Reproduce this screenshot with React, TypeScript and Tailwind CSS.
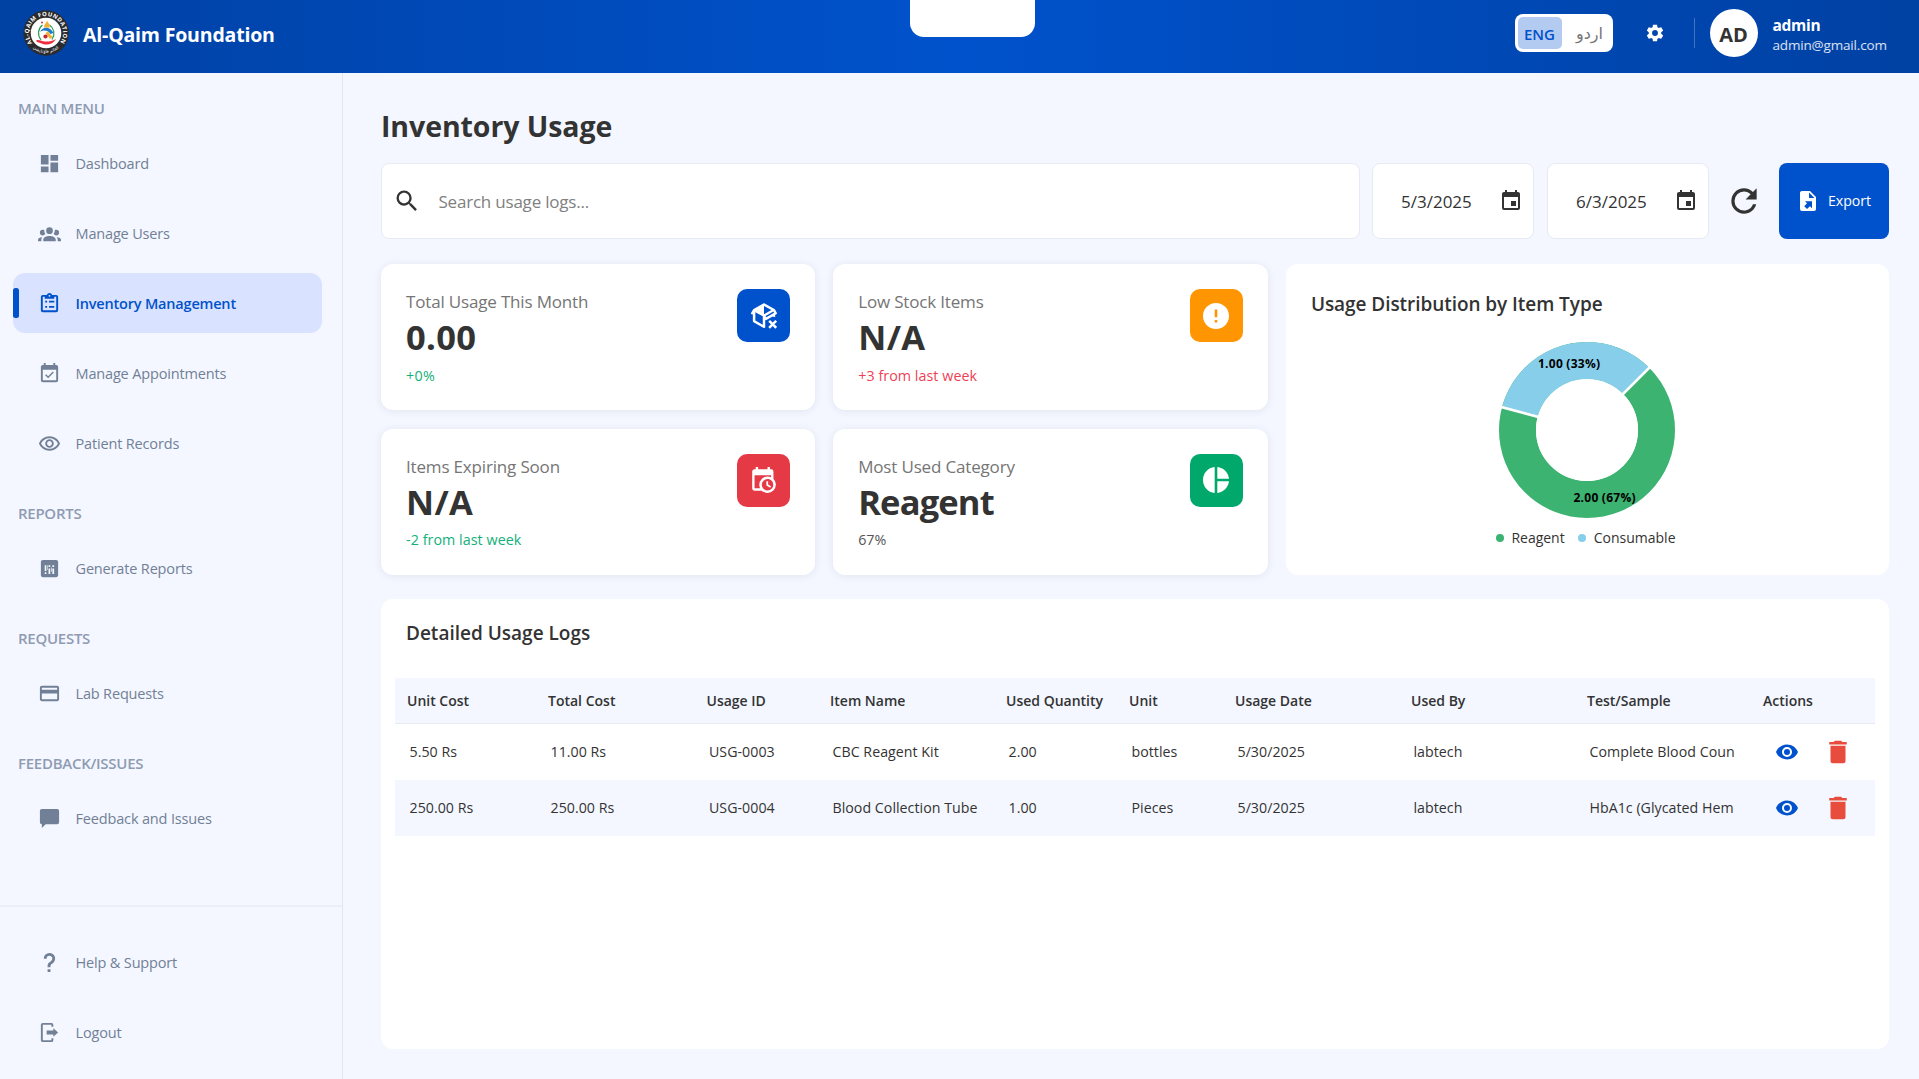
import type { ReactNode } from "react";

const paths = {
  dashboard: "M13,3V9H21V3M13,21H21V11H13M3,21H11V15H3M3,13H11V3H3V13Z",
  group:
    "M12,5.5A3.5,3.5 0 0,1 15.5,9A3.5,3.5 0 0,1 12,12.5A3.5,3.5 0 0,1 8.5,9A3.5,3.5 0 0,1 12,5.5M5,8C5.56,8 6.08,8.15 6.53,8.42C6.38,9.85 6.8,11.27 7.66,12.38C7.16,13.34 6.16,14 5,14A3,3 0 0,1 2,11A3,3 0 0,1 5,8M19,8A3,3 0 0,1 22,11A3,3 0 0,1 19,14C17.84,14 16.84,13.34 16.34,12.38C17.2,11.27 17.62,9.85 17.47,8.42C17.92,8.15 18.44,8 19,8M5.5,18.25C5.5,16.18 8.41,14.5 12,14.5C15.59,14.5 18.5,16.18 18.5,18.25V20H5.5V18.25M0,20V18.5C0,17.11 1.89,15.94 4.45,15.6C3.86,16.28 3.5,17.22 3.5,18.25V20H0M24,20H20.5V18.25C20.5,17.22 20.14,16.28 19.55,15.6C22.11,15.94 24,17.11 24,18.5V20Z",
  clipboard:
    "M19,3H14.82C14.4,1.84 13.3,1 12,1C10.7,1 9.6,1.84 9.18,3H5A2,2 0 0,0 3,5V19A2,2 0 0,0 5,21H19A2,2 0 0,0 21,19V5A2,2 0 0,0 19,3M12,3A1,1 0 0,1 13,4A1,1 0 0,1 12,5A1,1 0 0,1 11,4A1,1 0 0,1 12,3M7,7H17V5H19V19H5V5H7V7M7.5,9H9.5V11H7.5V9M11.5,9H17V11H11.5V9M7.5,14.5H9.5V16.5H7.5V14.5M11.5,14.5H17V16.5H11.5V14.5Z",
  calendarCheck:
    "M19,19H5V8H19M19,3H18V1H16V3H8V1H6V3H5C3.89,3 3,3.9 3,5V19A2,2 0 0,0 5,21H19A2,2 0 0,0 21,19V5A2,2 0 0,0 19,3M16.53,11.06L15.47,10L10.59,14.88L8.47,12.76L7.41,13.82L10.59,17L16.53,11.06Z",
  eyeOutline:
    "M12 6.5c3.79 0 7.17 2.13 8.82 5.5-1.65 3.37-5.02 5.5-8.82 5.5s-7.17-2.13-8.82-5.5C4.83 8.63 8.21 6.5 12 6.5m0-2C7 4.5 2.73 7.61 1 12c1.73 4.39 6 7.5 11 7.5s9.27-3.11 11-7.5c-1.73-4.39-6-7.5-11-7.5zm0 5c1.38 0 2.5 1.12 2.5 2.5s-1.12 2.5-2.5 2.5-2.5-1.12-2.5-2.5 1.12-2.5 2.5-2.5m0-2c-2.48 0-4.5 2.02-4.5 4.5s2.02 4.5 4.5 4.5 4.5-2.02 4.5-4.5-2.02-4.5-4.5-4.5z",
  report:
    "M19,3H5C3.9,3 3,3.9 3,5V19C3,20.1 3.9,21 5,21H19C20.1,21 21,20.1 21,19V5C21,3.9 20.1,3 19,3M7,8.5H8.7V14.5H7V8.5M7,16H8.7V17.8H7V16M11,8.5H12.8V10.5H11V8.5M11,12H12.8V17.8H11V12M15,8.5H16.8V10.5H15V8.5M15,12H16.8V17.8H15V12M9.6,8.5H10.2V13.5H9.6V8.5M13.6,11H14.3V15.5H13.6V11Z",
  card: "M20,8H4V6H20M20,18H4V12H20M20,4H4C2.89,4 2,4.89 2,6V18C2,19.1 2.9,20 4,20H20C21.1,20 22,19.1 22,18V6C22,4.89 21.1,4 20,4Z",
  message: "M20,2H4A2,2 0 0,0 2,4V16A2,2 0 0,0 4,18V22L8,18H20A2,2 0 0,0 22,16V4A2,2 0 0,0 20,2Z",
  help: "M10,19H13V22H10V19M12,2C17.35,2.22 19.68,7.62 16.5,11.67C15.67,12.67 14.33,13.33 13.67,14.17C13,15 13,16 13,17H10C10,15.33 10,13.92 10.67,12.92C11.33,11.92 12.67,11.33 13.5,10.67C15.92,8.43 15.32,5.26 12,5A3,3 0 0,0 9,8H6A6,6 0 0,1 12,2Z",
  logout:
    "M16,16.5V14H9V10H16V7.5L21,12L16,16.5M14,2A2,2 0 0,1 16,4V6H14V4H5V20H14V18H16V20A2,2 0 0,1 14,22H5A2,2 0 0,1 3,20V4A2,2 0 0,1 5,2H14Z",
  cog: "M12,15.5A3.5,3.5 0 0,1 8.5,12A3.5,3.5 0 0,1 12,8.5A3.5,3.5 0 0,1 15.5,12A3.5,3.5 0 0,1 12,15.5M19.43,12.97C19.47,12.65 19.5,12.33 19.5,12C19.5,11.67 19.47,11.34 19.43,11L21.54,9.37C21.73,9.22 21.78,8.95 21.66,8.73L19.66,5.27C19.54,5.05 19.27,4.96 19.05,5.05L16.56,6.05C16.04,5.66 15.5,5.32 14.87,5.07L14.5,2.42C14.46,2.18 14.25,2 14,2H10C9.75,2 9.54,2.18 9.5,2.42L9.13,5.07C8.5,5.32 7.96,5.66 7.44,6.05L4.95,5.05C4.73,4.96 4.46,5.05 4.34,5.27L2.34,8.73C2.21,8.95 2.27,9.22 2.46,9.37L4.57,11C4.53,11.34 4.5,11.67 4.5,12C4.5,12.33 4.53,12.65 4.57,12.97L2.46,14.63C2.27,14.78 2.21,15.05 2.34,15.27L4.34,18.73C4.46,18.95 4.73,19.03 4.95,18.95L7.44,17.94C7.96,18.34 8.5,18.68 9.13,18.93L9.5,21.58C9.54,21.82 9.75,22 10,22H14C14.25,22 14.46,21.82 14.5,21.58L14.87,18.93C15.5,18.67 16.04,18.34 16.56,17.94L19.05,18.95C19.27,19.03 19.54,18.95 19.66,18.73L21.66,15.27C21.78,15.05 21.73,14.78 21.54,14.63L19.43,12.97Z",
  magnify:
    "M9.5,3A6.5,6.5 0 0,1 16,9.5C16,11.11 15.41,12.59 14.44,13.73L14.71,14H15.5L20.5,19L19,20.5L14,15.5V14.71L13.73,14.44C12.59,15.41 11.11,16 9.5,16A6.5,6.5 0 0,1 3,9.5A6.5,6.5 0 0,1 9.5,3M9.5,5C7,5 5,7 5,9.5C5,12 7,14 9.5,14C12,14 14,12 14,9.5C14,7 12,5 9.5,5Z",
  calendar:
    "M19,19H5V8H19M16,1V3H8V1H6V3H5C3.89,3 3,3.89 3,5V19A2,2 0 0,0 5,21H19A2,2 0 0,0 21,19V5C21,3.89 20.1,3 19,3H18V1M17,12H12V17H17V12Z",
  refresh:
    "M17.65,6.35C16.2,4.9 14.21,4 12,4A8,8 0 0,0 4,12A8,8 0 0,0 12,20C15.73,20 18.84,17.45 19.73,14H17.65C16.83,16.33 14.61,18 12,18A6,6 0 0,1 6,12A6,6 0 0,1 12,6C13.66,6 15.14,6.69 16.22,7.78L13,11H20V4L17.65,6.35Z",
  fileExport:
    "M6,2C4.89,2 4,2.9 4,4V20A2,2 0 0,0 6,22H18A2,2 0 0,0 20,20V8L14,2M13,3.5L18.5,9H13M8.93,12.22H16V19.29L13.88,17.17L11.05,20L8.22,17.17L11.05,14.35",
  packageRemove:
    "M2,10.96C1.5,10.68 1.35,10.07 1.63,9.59L3.13,7C3.24,6.8 3.41,6.66 3.6,6.58L11.43,2.18C11.59,2.06 11.79,2 12,2C12.21,2 12.41,2.06 12.57,2.18L20.47,6.62C20.66,6.72 20.82,6.88 20.91,7.08L22.36,9.6C22.64,10.08 22.47,10.69 22,10.96L21,11.54V13.35C20.37,13.13 19.7,13 19,13V12.69L14,15.59C13.67,15.77 13.3,15.76 13,15.6V21.6L12.57,21.82C12.41,21.94 12.21,22 12,22C11.79,22 11.59,21.94 11.43,21.82L3.53,17.38C3.21,17.21 3,16.88 3,16.5V10.96C2.7,11.13 2.32,11.14 2,10.96M12,4.15L12,10.85L17.96,7.5L12,4.15M5,15.91L11,19.29V12.58L5,9.21V15.91M13.85,13.36L20.13,9.73L19.55,8.72L13.27,12.35L13.85,13.36M22.54,16.88L21.12,15.46L19,17.59L16.88,15.46L15.46,16.88L17.59,19L15.46,21.12L16.88,22.54L19,20.41L21.12,22.54L22.54,21.12L20.41,19L22.54,16.88Z",
  alert: "M13,13H11V7H13M13,17H11V15H13M12,2A10,10 0 0,0 2,12A10,10 0 0,0 12,22A10,10 0 0,0 22,12A10,10 0 0,0 12,2Z",
  calendarClock:
    "M15,13H16.5V15.82L18.94,17.23L18.19,18.53L15,16.69V13M19,8H5V19H9.67C9.24,18.09 9,17.07 9,16A7,7 0 0,1 16,9C17.07,9 18.09,9.24 19,9.67V8M5,21C3.89,21 3,20.1 3,19V5C3,3.89 3.89,3 5,3H6V1H8V3H16V1H18V3H19A2,2 0 0,1 21,5V11.1C22.24,12.36 23,14.09 23,16A7,7 0 0,1 16,23C14.09,23 12.36,22.24 11.1,21H5M16,11.15A4.85,4.85 0 0,0 11.15,16C11.15,18.68 13.32,20.85 16,20.85A4.85,4.85 0 0,0 20.85,16C20.85,13.32 18.68,11.15 16,11.15Z",
  pie: "M11,2V22C5.9,21.5 2,17.2 2,12C2,6.8 5.9,2.5 11,2M13,2V11H22C21.5,6.2 17.8,2.5 13,2M13,13V22C17.7,21.5 21.5,17.8 22,13H13Z",
  eye: "M12,9A3,3 0 0,0 9,12A3,3 0 0,0 12,15A3,3 0 0,0 15,12A3,3 0 0,0 12,9M12,17A5,5 0 0,1 7,12A5,5 0 0,1 12,7A5,5 0 0,1 17,12A5,5 0 0,1 12,17M12,4.5C7,4.5 2.73,7.61 1,12C2.73,16.39 7,19.5 12,19.5C17,19.5 21.27,16.39 23,12C21.27,7.61 17,4.5 12,4.5Z",
  trash: "M19,4H15.5L14.5,3H9.5L8.5,4H5V6H19M6,19A2,2 0 0,0 8,21H16A2,2 0 0,0 18,19V7H6V19Z",
};
type IconName = keyof typeof paths;

function Icon({ name, className, viewBox = "0 0 24 24" }: { name: IconName; className: string; viewBox?: string }) {
  return (
    <svg viewBox={viewBox} className={`block shrink-0 fill-current ${className}`}>
      <path fillRule="evenodd" d={paths[name]} />
    </svg>
  );
}

function Logo() {
  return (
    <svg viewBox="0 0 46 46" className="size-[46px] shrink-0">
      <defs>
        <path id="ring-top" d="M 10 34 A 17.03 17.03 0 1 1 36 34" />
        <path id="ring-bottom" d="M 8.500 36.500 A 19.8 19.8 0 0 0 37.500 36.500" />
      </defs>
      <circle cx="23" cy="23" r="22.700" fill="#2b2b2e" />
      <circle cx="23" cy="23" r="15.300" fill="#fff" />
      <text fontFamily="Open Sans, sans-serif" fontWeight="700" fontSize="5.800" fill="#fff">
        <textPath href="#ring-top" textLength="74" startOffset="1">
          AL-QAIM FOUNDATION
        </textPath>
      </text>
      <text fontFamily="DejaVu Sans, sans-serif" fontSize="4.200" fill="#fff">
        <textPath href="#ring-bottom" startOffset="50%" textAnchor="middle">
          القائم فاؤنڈیشن
        </textPath>
      </text>
      <path d="M19.500 15C15 18.500 14 25 18 30" fill="none" stroke="#2f9e5b" strokeWidth="1.200" />
      <path d="M26.500 15C31 18 32.500 24 29 29.500" fill="none" stroke="#2f9e5b" strokeWidth="1.200" />
      <path d="M24 10.500C25 13 28 15 26.500 17.500H21C21 14 23.500 13 24 10.500Z" fill="#f2b134" />
      <circle cx="19" cy="12.500" r="1" fill="#d9363e" />
      <path d="M17 22C19 16.500 27 15.500 30.500 23L27.500 24C25 20 20 19.500 17 22Z" fill="#2379c9" />
      <path d="M25 21.500L29.500 27L27 29L22.500 23Z" fill="#f2b134" />
      <circle cx="22.500" cy="26.500" r="2.100" fill="#c8262e" />
      <path d="M13.500 30C17 29.500 19 31 22 31.500C26 31.800 29 31 33 29C30 34 25 35.500 20 34L13.500 31.800Z" fill="#ee2b3c" />
    </svg>
  );
}

function NavItem({ icon, label, active = false }: { icon: IconName; label: string; active?: boolean }) {
  return (
    <div
      className={`relative mb-2.5 ml-[13px] flex h-[60px] w-[309px] items-center rounded-xl pl-[25px] ${
        active ? "bg-[#d9e2ff] text-[#0052cc]" : "text-[#718096]"
      }`}
    >
      {active && <span className="absolute top-[15px] left-0 h-[30px] w-[5.5px] rounded-[2.500px] bg-[#0052cc]" />}
      <Icon name={icon} className="size-[23px]" />
      <span
        className={`ml-[14.500px] pt-px text-[14.500px] ${active ? "font-semibold tracking-[-0.19px]" : "tracking-[-0.16px]"}`}
      >
        {label}
      </span>
    </div>
  );
}

function SectionLabel({ children }: { children: ReactNode }) {
  return (
    <div className="flex h-[55px] items-start pt-[18.500px] pl-[18px] text-[15px] leading-[22px] font-semibold tracking-[-0.27px] text-[#8f9bb3]">
      {children}
    </div>
  );
}

function StatCard(p: { title: string; value: string; note: string; noteClass: string; valueClass: string; children: ReactNode; tile: string }) {
  return (
    <div className="flex h-[146px] justify-between rounded-xl bg-white pt-[25px] pr-[25px] pl-[25px] shadow-[0_1px_9px_rgba(30,41,80,0.09)]">
      <div className="pt-px">
        <div className="text-[17px] leading-6 tracking-[-0.17px] text-[#757575]">{p.title}</div>
        <div className={`leading-[45px] font-bold text-[#333] ${p.valueClass}`}>{p.value}</div>
        <div className={`mt-[6.500px] text-[14.300px] leading-5 ${p.noteClass}`}>{p.note}</div>
      </div>
      <div className={`flex size-[53px] items-center justify-center rounded-[10px] text-white ${p.tile}`}>{p.children}</div>
    </div>
  );
}

function DateField({ value }: { value: string }) {
  return (
    <div className="flex h-[76px] w-[162px] items-center justify-between rounded-lg border border-[#e6eaf2] bg-white pr-[10px] pl-[28px]">
      <span className="pt-px text-[17px] text-[#333]">{value}</span>
      <Icon name="calendar" className="size-6 text-[#333]" />
    </div>
  );
}

const columns = ["Unit Cost", "Total Cost", "Usage ID", "Item Name", "Used Quantity", "Unit", "Usage Date", "Used By", "Test/Sample", "Actions"];
const rows = [
  ["5.50 Rs", "11.00 Rs", "USG-0003", "CBC Reagent Kit", "2.00", "bottles", "5/30/2025", "labtech", "Complete Blood Coun"],
  ["250.00 Rs", "250.00 Rs", "USG-0004", "Blood Collection Tube", "1.00", "Pieces", "5/30/2025", "labtech", "HbA1c (Glycated Hem"],
];
const gridCols = "grid grid-cols-[141px_158.500px_123.500px_176px_123px_106px_176px_176px_176px_1fr] items-center";

export default function App() {
  return (
    <div className="flex h-[1079px] w-[1919px] flex-col overflow-hidden bg-[#f4f7ff] font-['Open_Sans',sans-serif]">
      <header className="relative flex h-[73px] shrink-0 items-center justify-between bg-[linear-gradient(90deg,#0041a3_0%,#0052cc_50%,#0041a3_100%)] pb-[7px]">
        <div className="flex items-center pl-[23px]">
          <Logo />
          <span className="ml-[14px] pt-[4px] text-[19.500px] font-bold tracking-[-0.18px] text-white">Al-Qaim Foundation</span>
        </div>
        <div className="absolute top-0 left-[909.500px] h-[37px] w-[125.500px] rounded-b-[14px] bg-white" />
        <div className="flex items-center pr-[33px]">
          <div className="flex h-[38px] w-[98px] items-center rounded-lg bg-white px-[3px]">
            <span className="flex h-8 w-11 items-center justify-center rounded-[5px] bg-[#b3cbf0] pt-[3px] text-[15px] font-semibold text-[#0052cc]">
              ENG
            </span>
            <span className="flex flex-1 justify-center pt-px pl-2 font-['DejaVu_Sans',sans-serif] text-[16px] text-[#757575]" lang="ur">
              اردو
            </span>
          </div>
          <Icon name="cog" className="ml-[32px] size-5 text-white" />
          <div className="ml-[29px] h-[30px] w-px bg-white/25" />
          <div className="ml-[15px] flex size-12 items-center justify-center rounded-full bg-white pt-[3px] text-[20px] font-bold text-[#333]">AD</div>
          <div className="ml-[15px] w-[113.500px] pt-[3px] whitespace-nowrap text-white">
            <div className="text-[15.500px] leading-5 font-bold tracking-[-0.3px]">admin</div>
            <div className="text-[13.500px] leading-5 tracking-[-0.17px] text-white/85">admin@gmail.com</div>
          </div>
        </div>
      </header>

      <div className="flex min-h-0 flex-1">
        <aside className="flex w-[343px] shrink-0 flex-col border-r border-[#e2e6ed] pt-[5px]">
          <SectionLabel>MAIN MENU</SectionLabel>
          <NavItem icon="dashboard" label="Dashboard" />
          <NavItem icon="group" label="Manage Users" />
          <NavItem icon="clipboard" label="Inventory Management" active />
          <NavItem icon="calendarCheck" label="Manage Appointments" />
          <NavItem icon="eyeOutline" label="Patient Records" />
          <SectionLabel>REPORTS</SectionLabel>
          <NavItem icon="report" label="Generate Reports" />
          <SectionLabel>REQUESTS</SectionLabel>
          <NavItem icon="card" label="Lab Requests" />
          <SectionLabel>FEEDBACK/ISSUES</SectionLabel>
          <NavItem icon="message" label="Feedback and Issues" />
          <div className="mt-auto h-0.5 bg-[#ebeff5]" />
          <div className="pt-[25px] pb-[7px]">
            <NavItem icon="help" label="Help & Support" />
            <NavItem icon="logout" label="Logout" />
          </div>
        </aside>

        <main className="flex flex-1 flex-col pt-[32px] pr-[30px] pl-[38px]">
          <h1 className="h-[58px] text-[28.500px] leading-[43px] font-bold tracking-[-0.08px] text-[#333]">Inventory Usage</h1>
          <div className="flex items-center">
            <div className="flex h-[76px] w-[979px] items-center rounded-lg border border-[#e6eaf2] bg-white pl-[11px]">
              <Icon name="magnify" className="size-7 text-[#333]" />
              <span className="ml-[17.500px] pt-px text-[17px] tracking-[-0.21px] text-[#808080]">Search usage logs...</span>
            </div>
            <div className="ml-3">
              <DateField value="5/3/2025" />
            </div>
            <div className="ml-[13px]">
              <DateField value="6/3/2025" />
            </div>
            <Icon name="refresh" className="ml-4 size-[38px] text-[#333]" />
            <div className="ml-auto flex h-[76px] w-[110px] items-center rounded-lg bg-[#0052cc] pl-[17px] text-white">
              <Icon name="fileExport" className="size-6" />
              <span className="ml-2 text-[14.200px] tracking-[-0.05px]">Export</span>
            </div>
          </div>

          <div className="mt-[25px] grid grid-cols-[434px_434.500px_603px] gap-x-[18.200px] gap-y-[18.500px]">
            <StatCard title="Total Usage This Month" value="0.00" valueClass="text-[34.500px] tracking-[0.3px]" note="+0%" noteClass="text-[#12b07a] tracking-[0.3px]" tile="bg-[#0052cc]">
              <Icon name="packageRemove" className="size-[26px]" viewBox="1.500 2 21 20.600" />
            </StatCard>
            <StatCard title="Low Stock Items" value="N/A" valueClass="text-[34.500px] tracking-[0.4px]" note="+3 from last week" noteClass="text-[#ef3f55] tracking-[0.05px]" tile="bg-[#ff9500]">
              <Icon name="alert" className="size-[26px]" viewBox="2 2 20 20" />
            </StatCard>
            <section className="row-span-2 flex flex-col rounded-xl bg-white pl-[25px]">
              <h2 className="pt-[25px] text-[19px] leading-[30px] font-semibold tracking-[-0.06px] text-[#333]">Usage Distribution by Item Type</h2>
              <svg viewBox="0 0 180 180" className="mt-[20.500px] ml-[186.500px] size-[180px]">
                <circle cx="90" cy="90" r="69.500" fill="none" stroke="#3cb371" strokeWidth="37" />
                <path d="M139.140 40.860A69.500 69.500 0 0 0 22.870 72.010" fill="none" stroke="#87ceeb" strokeWidth="37" />
                <path d="M90 90L155.760 24.240M90 90L-1 65.600" stroke="#fff" strokeWidth="2.600" />
                <circle cx="90" cy="90" r="51" fill="#fff" />
                <g fontFamily="Open Sans, sans-serif" fontSize="12" fontWeight="700" fill="#000" textAnchor="middle">
                  <text x="72" y="28" textLength="62">1.00 (33%)</text>
                  <text x="107.500" y="162" textLength="62">2.00 (67%)</text>
                </g>
              </svg>
              <div className="mt-[8.500px] ml-[185px] flex items-center text-[14px] leading-5 text-[#333]">
                <span className="mr-[7.500px] size-2 rounded-full bg-[#3cb371]" />
                Reagent
                <span className="mr-[8px] ml-[13px] size-2 rounded-full bg-[#87ceeb]" />
                Consumable
              </div>
            </section>
            <StatCard title="Items Expiring Soon" value="N/A" valueClass="text-[34.500px] tracking-[0.4px]" note="-2 from last week" noteClass="text-[#12b07a] tracking-[0.05px]" tile="bg-[#e63946]">
              <Icon name="calendarClock" className="h-[26px] w-[24px]" viewBox="3 1 20 22" />
            </StatCard>
            <StatCard title="Most Used Category" value="Reagent" valueClass="text-[34.500px] tracking-[-0.85px]" note="67%" noteClass="text-[#555]" tile="bg-[#00a86b]">
              <Icon name="pie" className="size-[26px]" viewBox="2 2 20 20" />
            </StatCard>
          </div>

          <section className="mt-[24.500px] h-[449.500px] rounded-xl bg-white px-[14px]">
            <h2 className="h-[78.500px] pt-[18.500px] pl-[11px] text-[19px] leading-[30px] font-semibold text-[#333]">Detailed Usage Logs</h2>
            <div className={`h-[46px] border-b border-[#e6eaf2] bg-[#f4f7ff] text-[14px] font-semibold text-[#333] ${gridCols}`}>
              {columns.map((c) => (
                <span key={c} className="pl-3 whitespace-nowrap">
                  {c}
                </span>
              ))}
            </div>
            {rows.map((r, i) => (
              <div key={i} className={`h-14 text-[14.200px] tracking-[0.03px] text-[#333] ${i % 2 ? "bg-[#f4f7ff]" : "bg-white"} ${gridCols}`}>
                {r.map((cell, j) => (
                  <span key={j} className="overflow-hidden pt-px pl-[14.500px] whitespace-nowrap">
                    {cell}
                  </span>
                ))}
                <span className="flex items-center pl-[24px]">
                  <Icon name="eye" className="size-6 text-[#0052cc]" />
                  <Icon name="trash" className="ml-[24px] size-[30px] text-[#e74c3c]" />
                </span>
              </div>
            ))}
          </section>
        </main>
      </div>
    </div>
  );
}
